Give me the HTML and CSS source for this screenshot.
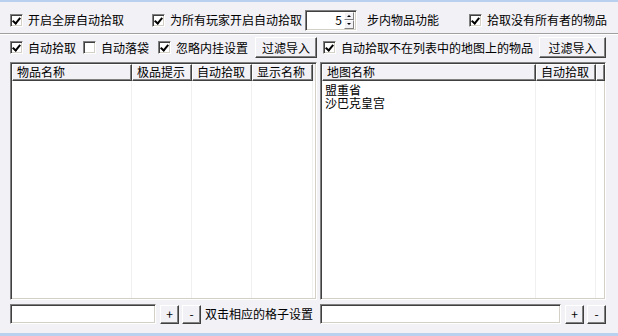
FILE: index.html
```html
<!DOCTYPE html>
<html>
<head>
<meta charset="utf-8">
<link rel="stylesheet" href="styles.css">
</head>
<body>
<div class="win">
  <div class="row1">
    <label class="cb cb-a"><span class="box on"></span>开启全屏自动拾取</label>
    <label class="cb cb-b"><span class="box on"></span>为所有玩家开启自动拾取</label>
    <div class="spin">
      <span class="spin-val">5</span>
      <div class="spin-btns"><span class="sb up"></span><span class="sb down"></span></div>
    </div>
    <span class="lbl-step">步内物品功能</span>
    <label class="cb cb-c"><span class="box on"></span>拾取没有所有者的物品</label>
  </div>
  <div class="sep"></div>
  <div class="main">
    <div class="bar bar-left">
      <label class="cb"><span class="box on"></span>自动拾取</label>
      <label class="cb cb-g7"><span class="box"></span>自动落袋</label>
      <label class="cb cb-g9"><span class="box on"></span>忽略内挂设置</label>
      <button class="btn btn-imp">过滤导入</button>
    </div>
    <div class="bar bar-right">
      <label class="cb"><span class="box on"></span>自动拾取不在列表中的地图上的物品</label>
      <button class="btn btn-imp2">过滤导入</button>
    </div>
    <div class="list list-left">
      <div class="hdr">
        <span class="hc w120">物品名称</span>
        <span class="hc w60">极品提示</span>
        <span class="hc w60">自动拾取</span>
        <span class="hc w61">显示名称</span>
      </div>
      <div class="body">
        <div class="cols"><span class="w120"></span><span class="w60"></span><span class="w60"></span><span class="w61"></span></div>
      </div>
    </div>
    <div class="list list-right">
      <div class="hdr">
        <span class="hc w214">地图名称</span>
        <span class="hc w60">自动拾取</span>
        <span class="hc w9"></span>
      </div>
      <div class="body">
        <div class="cols"><span class="w214"></span><span class="w60"></span></div>
        <div class="rows">
          <div class="r">盟重省</div>
          <div class="r">沙巴克皇宫</div>
        </div>
      </div>
    </div>
    <div class="foot foot-left">
      <div class="inp w146"></div>
      <button class="btn sm">+</button>
      <button class="btn sm">-</button>
      <span class="hint">双击相应的格子设置</span>
    </div>
    <div class="foot foot-right">
      <div class="inp grow"></div>
      <button class="btn sm">+</button>
      <button class="btn sm">-</button>
    </div>
  </div>
</div>
</body>
</html>
```
FILE: styles.css
```css
* { box-sizing: border-box; }
html, body { margin: 0; padding: 0; }
body {
  width: 618px;
  height: 336px;
  overflow: hidden;
  background: #f2f1f6;
  font-family: "Noto Sans CJK SC", "Noto Sans", sans-serif;
  font-size: 12px;
  color: #000;
}
.win {
  width: 618px;
  height: 336px;
  border-top: 2px solid #b9d1ee;
  border-bottom: 3px solid #b9d1ee;
  display: flex;
  flex-direction: column;
}
.row1 {
  height: 22px;
  margin-top: 7px;
  display: flex;
  align-items: center;
  padding-left: 10px;
}
.cb {
  display: flex;
  align-items: center;
  white-space: nowrap;
  line-height: 14px;
}
.box {
  width: 13px;
  height: 13px;
  margin-right: 5px;
  background: #fff;
  border-top: 1px solid #808080;
  border-left: 1px solid #808080;
  border-bottom: 1px solid #fff;
  border-right: 1px solid #fff;
  box-shadow: inset 1px 1px 0 #404040, inset -1px -1px 0 #d4d0c8;
  position: relative;
  flex: none;
}
.box.on::after {
  content: "";
  position: absolute;
  left: 3px;
  top: 1px;
  width: 3px;
  height: 6px;
  border-right: 2px solid #000;
  border-bottom: 2px solid #000;
  transform: rotate(40deg);
}
.cb-b { margin-left: 28px; }
.spin {
  margin-left: 3px;
  width: 52px;
  height: 21px;
  background: #fff;
  border-top: 1px solid #808080;
  border-left: 1px solid #808080;
  border-bottom: 1px solid #fff;
  border-right: 1px solid #fff;
  box-shadow: inset 1px 1px 0 #404040, inset -1px -1px 0 #d4d0c8;
  display: flex;
  align-items: center;
  justify-content: flex-end;
  padding-right: 2px;
}
.spin-val { margin-right: 2px; line-height: 14px; }
.spin-btns {
  width: 10px;
  height: 17px;
  display: flex;
  flex-direction: column;
}
.sb {
  flex: 1;
  background: #f2f1f6;
  border-top: 1px solid #fff;
  border-left: 1px solid #fff;
  border-right: 1px solid #808080;
  border-bottom: 1px solid #808080;
  position: relative;
}
.sb::after {
  content: "";
  position: absolute;
  left: 2px;
  top: 2px;
  border-left: 2px solid transparent;
  border-right: 2px solid transparent;
}
.sb.up::after { border-bottom: 2px solid #000; }
.sb.down::after { border-top: 2px solid #000; }
.lbl-step { margin-left: 10px; white-space: nowrap; line-height: 14px; }
.cb-c { margin-left: 30px; }
.sep {
  margin-top: 2px;
  height: 2px;
  border-top: 1px solid #a0a0a0;
  border-bottom: 1px solid #fff;
}
.main {
  margin-top: 2px;
  padding-left: 10px;
  display: grid;
  grid-template-columns: 307px 286px;
  grid-template-rows: 21px 238px 20px;
  column-gap: 3px;
  row-gap: 4px;
}
.main .bar { align-self: start; }
.bar {
  display: flex;
  align-items: center;
  height: 21px;
}
.cb-g7 { margin-left: 7px; }
.cb-g9 { margin-left: 9px; }
.btn {
  font-family: inherit;
  font-size: 12px;
  color: #000;
  background: #f2f1f6;
  border-top: 1px solid #fff;
  border-left: 1px solid #fff;
  border-right: 1px solid #404040;
  border-bottom: 1px solid #404040;
  box-shadow: inset -1px -1px 0 #808080;
  padding: 0;
  margin: 0;
  line-height: 14px;
  height: 21px;
}
.btn-imp { margin-left: 7px; width: 64px; }
.bar-right { padding-left: 3px; }
.btn-imp2 { margin-left: 6px; width: 67px; }
.list {
  background: #fff;
  border-top: 1px solid #808080;
  border-left: 1px solid #808080;
  border-bottom: 1px solid #fff;
  border-right: 1px solid #fff;
  box-shadow: inset 1px 1px 0 #404040, inset -1px -1px 0 #d4d0c8;
  padding: 1px;
  display: flex;
  flex-direction: column;
  overflow: hidden;
}
.hdr {
  display: flex;
  height: 17px;
  flex: none;
  background: #f2f1f6;
}
.hc {
  flex: none;
  height: 17px;
  background: #f2f1f6;
  border-top: 1px solid #fff;
  border-left: 1px solid #fff;
  border-right: 1px solid #404040;
  border-bottom: 1px solid #404040;
  box-shadow: inset -1px -1px 0 #808080;
  padding-left: 4px;
  line-height: 14px;
  white-space: nowrap;
  overflow: hidden;
}
.w120 { width: 120px; }
.w60 { width: 60px; }
.w61 { width: 61px; }
.w214 { width: 214px; }
.w9 { width: 9px; }
.body {
  flex: 1;
  position: relative;
}
.cols {
  position: absolute;
  inset: 0;
  display: flex;
}
.cols span {
  flex: none;
  height: 100%;
  border-right: 1px solid #f0f0f0;
}
.rows {
  position: relative;
  padding-top: 2px;
}
.r {
  height: 13px;
  line-height: 13px;
  padding-left: 3px;
}
.foot {
  display: flex;
  align-items: center;
  height: 20px;
}
.inp {
  height: 20px;
  background: #fff;
  border-top: 1px solid #808080;
  border-left: 1px solid #808080;
  border-bottom: 1px solid #fff;
  border-right: 1px solid #fff;
  box-shadow: inset 1px 1px 0 #404040, inset -1px -1px 0 #d4d0c8;
}
.w146 { width: 146px; }
.grow { flex: 1; }
.btn.sm {
  width: 19px;
  height: 19px;
  margin-left: 3px;
  line-height: 14px;
}
.foot-left .inp + .btn.sm { margin-left: 4px; }
.foot-right .inp + .btn.sm { margin-left: 4px; }
.hint { margin-left: 4px; white-space: nowrap; line-height: 14px; }
```
